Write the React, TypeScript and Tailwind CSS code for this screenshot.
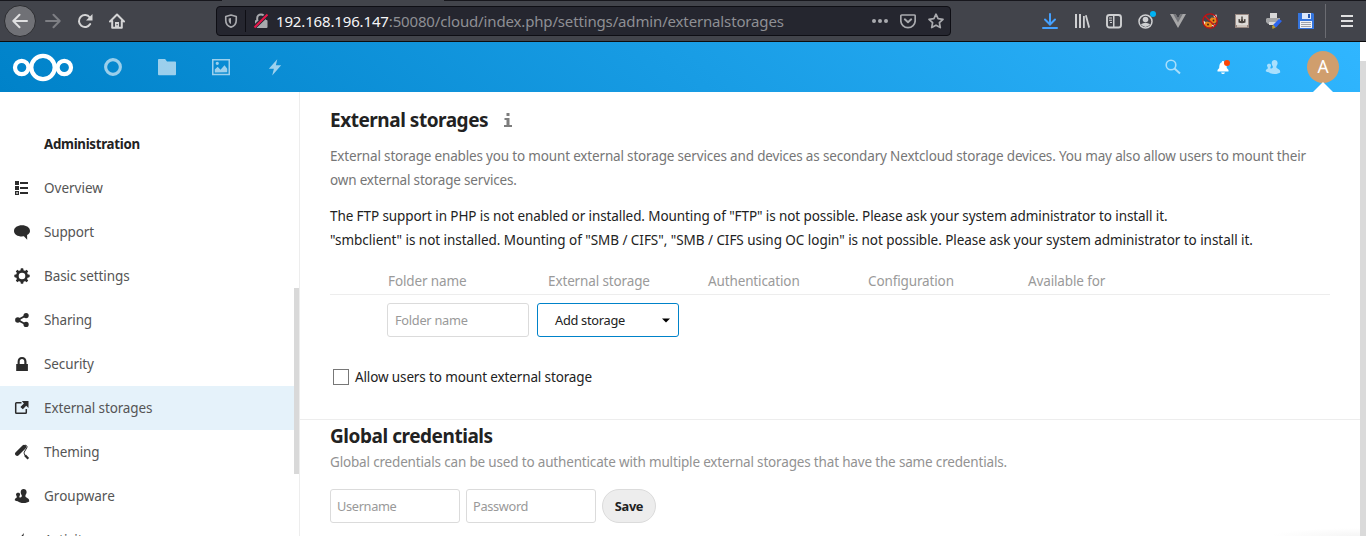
import React from "react";

type P = { children?: React.ReactNode; size?: number; className?: string; box?: string };

function Svg({ children, size = 16, className = "", box = "0 0 16 16" }: P) {
  return (
    <svg width={size} height={size} viewBox={box} className={"block shrink-0 " + className} fill="currentColor">
      {children}
    </svg>
  );
}

const Bolt = () => <path d="M10 1 2.5 9.5H7L5.5 15.5 13.5 6.5H8.8Z" />;

const Contacts = () => (
  <path d="M9.6 1C7.9 1 6.7 2.2 6.7 3.9c0 1.2.3 2.3 1 3 .2.8.1 1.500-.2 2L5.800 9.700C5.500 9.300 5.300 8.800 5.400 8.300 5.900 7.800 6.100 6.900 6.100 6.200 6.100 5.400 5.400 4.700 4.200 4.700S2 5.400 2 6.200c0 .7.200 1.600.700 2.100.1.700 0 1.300-.3 1.600L1.300 10.400C.9 10.700.8 11.200.8 12.200c.8.600 1.800.900 3 1C5 14.400 7 15 9.500 15s4.700-.6 5.700-1.500c0-1.600-.3-2.500-1.200-2.900l-2.300-1.500c-.4-.5-.4-1.400-.2-2.200.8-.8 1.100-1.900 1.100-3C12.600 2.200 11.300 1 9.600 1Z" />
);

const navItems: { label: string; icon: React.ReactNode; track: string; active?: boolean }[] = [
  {
    label: "Overview",
    track: "tracking-[0px]",
    icon: (
      <path fillRule="evenodd" d="M1 1h4v4H1ZM6 2h8v2H6ZM1 6h4v4H1ZM6 7h8v2H6ZM1 11h4v4H1ZM2.300 12.200v1.600h1.500v-1.600ZM6 12h8v2H6Z" />
    ),
  },
  {
    label: "Support",
    track: "tracking-[-0.15px]",
    icon: <path d="M8 1.300C3.500 1.300 0 3.600 0 6.900s3.500 5.500 8 5.500c.7 0 1.300 0 1.900-.1l3.300 3.400-.1-4.600c1.800-1 2.900-2.500 2.900-4.200 0-3.300-3.500-5.600-8-5.600Z" />,
  },
  {
    label: "Basic settings",
    track: "tracking-[-0.08px]",
    icon: (
      <g>
        <path fillRule="evenodd" d="M8 2a6 6 0 1 0 0 12A6 6 0 0 0 8 2Zm0 2.700a3.300 3.300 0 1 1 0 6.600 3.300 3.300 0 0 1 0-6.600Z" />
        {[0, 45, 90, 135, 180, 225, 270, 315].map((a) => (
          <rect key={a} x="6.600" y="0.300" width="2.800" height="3.200" rx=".8" transform={`rotate(${a} 8 8)`} />
        ))}
      </g>
    ),
  },
  {
    label: "Sharing",
    track: "tracking-[-0.15px]",
    icon: (
      <g>
        <path d="M12 3.500 3.800 8 12 12.500" fill="none" stroke="currentColor" strokeWidth="1.900" />
        <circle cx="12.100" cy="3.600" r="2.600" />
        <circle cx="3.800" cy="8" r="2.700" />
        <circle cx="12.100" cy="12.400" r="2.600" />
      </g>
    ),
  },
  {
    label: "Security",
    track: "tracking-[-0.1px]",
    icon: <path fillRule="evenodd" d="M8 1C5.200 1 3.600 3 3.600 5.500V8H2.200v7h11.700V8h-1.400V5.500C12.500 3 10.800 1 8 1Zm0 2c1.500 0 2.300 1 2.300 2.600V8H5.700V5.600C5.700 4 6.500 3 8 3Z" />,
  },
  {
    label: "External storages",
    track: "tracking-[-0.12px]",
    active: true,
    icon: (
      <g>
        <path d="M7.500 2.700H2.500Q1.700 2.700 1.700 3.500V12.500Q1.700 13.300 2.500 13.300H11.500Q12.300 13.300 12.300 12.500V9" fill="none" stroke="currentColor" strokeWidth="1.500" />
        <path d="M7.800 1H14.500V8L12.200 5.800 8.800 9.200 6.400 7 9.900 3.500Z" />
      </g>
    ),
  },
  {
    label: "Theming",
    track: "tracking-[-0.1px]",
    icon: (
      <g>
        <path d="M10 3 3.200 9.800" fill="none" stroke="currentColor" strokeWidth="4.300" strokeLinecap="round" />
        <path d="M11 1.200C13 1.200 13.500 2.500 12.700 4L10.200 8.200Q9.700 9.800 11.300 11.800" fill="none" stroke="currentColor" strokeWidth="1" />
        <path d="m11 11.200 3.300 3.600" fill="none" stroke="currentColor" strokeWidth="2.300" />
      </g>
    ),
  },
  { label: "Groupware", track: "tracking-[0px]", icon: <Contacts /> },
  { label: "Activity", track: "tracking-[0px]", icon: <Bolt /> },
];

function BrowserBar() {
  return (
    <div className="relative flex h-[42px] items-center border-t border-b border-t-[#17171d] border-b-[#0c0c0d] bg-[#42444b] text-[#cfd0d2]">
      <div className="absolute -top-px left-[222px] h-px w-[222px] bg-[#42444b]" />
      <div className="ml-1 flex h-8 w-8 shrink-0 items-center justify-center rounded-full border border-[#2c2d31] bg-[#707176] text-[#e0e0e1]">
        <Svg><path d="M15 8H1.500M7.500 1.800 1.300 8l6.200 6.200" fill="none" stroke="currentColor" strokeWidth="2" strokeLinecap="round" strokeLinejoin="round" /></Svg>
      </div>
      <Svg className="ml-[9px] text-[#7e7f84]"><path d="M1 8h13.500M8.500 1.800 14.700 8l-6.200 6.200" fill="none" stroke="currentColor" strokeWidth="2" strokeLinecap="round" strokeLinejoin="round" /></Svg>
      <Svg className="ml-4 text-[#d4d4d5]">
        <path d="M13.200 11A6 6 0 1 1 12.800 4.500" fill="none" stroke="currentColor" strokeWidth="2" strokeLinecap="round" />
        <path d="M15.500 1v6.500H9Z" />
      </Svg>
      <Svg className="ml-4 text-[#d4d4d5]">
        <path d="M1 8.500 8 1.500l7 7M3.200 8v6.800h9.600V8" fill="none" stroke="currentColor" strokeWidth="2" strokeLinecap="round" strokeLinejoin="round" />
        <path d="M6 9h4v6H6Z" /><path d="M7.500 11h1.200v1.300H7.500Z" fill="#42444b" />
      </Svg>
      <div className="ml-[91px] flex h-[30px] w-[735px] shrink-0 items-center rounded-[4px] border border-[#0e0e14] bg-[#25262f] text-[#a9aaae]">
        <Svg size={14} className="ml-[7px]">
          <path d="M8 1.200 14 2.800V7c0 4-2.300 6.800-6 8C4.300 13.800 2 11 2 7V2.800Z" fill="none" stroke="currentColor" strokeWidth="1.900" strokeLinejoin="round" />
          <path d="M8 4.500v7C6.200 10.500 5.300 9 5.300 7V5Z" />
        </Svg>
        <div className="ml-[7px] h-[22px] w-px bg-[#0e0e14]" />
        <Svg className="ml-[7px]">
          <path d="M4.200 7.500V5.200a3.800 3.800 0 0 1 7.600 0v2.300" fill="none" stroke="currentColor" strokeWidth="2" />
          <rect x="2" y="7" width="12.500" height="8" rx="1" />
          <path d="M1 14.500 14.500 1.500" stroke="#25262f" strokeWidth="4" />
          <path d="M1.500 14.500 14.500 1.500" stroke="#e8174a" strokeWidth="2" />
        </Svg>
        <div className="ml-[7px] w-[590px] whitespace-nowrap font-['Noto_Sans'] text-[15px] leading-[22px] tracking-[-0.15px] text-[#8e8f94]">
          <span className="text-[#f5f5f7]">192.168.196.147</span>:50080/cloud/index.php/settings/admin/externalstorages
        </div>
        <Svg className="ml-[6px]"><circle cx="2" cy="8" r="2" /><circle cx="8" cy="8" r="2" /><circle cx="14" cy="8" r="2" /></Svg>
        <Svg className="ml-3">
          <path d="M2 2h12.200a1 1 0 0 1 1 1v4.500a7.200 7.200 0 0 1-14.400 0V3a1 1 0 0 1 1-1Z" fill="none" stroke="currentColor" strokeWidth="1.700" />
          <path d="m4.800 6.300 3.200 3 3.200-3" fill="none" stroke="currentColor" strokeWidth="1.900" strokeLinecap="round" strokeLinejoin="round" />
        </Svg>
        <Svg className="ml-3"><path d="m8 1.200 2.100 4.500 4.900.6-3.600 3.400.9 4.900L8 12.200l-4.300 2.400.9-4.900L1 6.300l4.900-.6Z" fill="none" stroke="currentColor" strokeWidth="1.700" strokeLinejoin="round" /></Svg>
      </div>
      <Svg className="ml-[91px] text-[#45a1ff]"><path d="M8 1v10M3 6.500 8 11.500l5-5M1 15h14" fill="none" stroke="currentColor" strokeWidth="2" strokeLinecap="round" /></Svg>
      <Svg className="ml-4"><path d="M1 1h2v14H1ZM5 1h2v14H5ZM9 3h1.800v12H9ZM11 2.500l1.700-.6L16 14.300l-1.700.7Z" /></Svg>
      <Svg className="ml-4">
        <rect x="1" y="2" width="14" height="12.500" rx="2.500" fill="none" stroke="currentColor" strokeWidth="1.900" />
        <path d="M7 2h1.500v12H7ZM3 4.500h3v1H3ZM3 6.700h3v1H3ZM4 9h2v1H4Z" />
      </Svg>
      <div className="relative ml-4">
        <Svg><circle cx="7.500" cy="8.500" r="6.500" fill="none" stroke="currentColor" strokeWidth="1.500" /><circle cx="7.500" cy="6.500" r="2.800" /><path d="M2.800 11.300Q7.500 8.300 12.200 11.300 9.800 14 7.500 14t-4.700-2.700Z" /></Svg>
        <div className="absolute -top-[2px] left-[12px] h-[6px] w-[6px] rounded-full bg-[#00b3f4]" />
      </div>
      <Svg className="ml-4"><path d="M0 1h5.500L8 5.500 10.500 1H16L8 15Z" fill="#a7a7a8" /><path d="M3.200 1h2.500L8 5.200 10.300 1h2.500L8 9.500Z" fill="#747579" /></Svg>
      <Svg className="ml-4">
        <path d="M7.500 6.500 9.500 4.500 14.500 5 15 8.500 12.500 10.500 8.500 9.500ZM2.500 9.500 5 8.500 8.500 9.500 11 12 9 14.500H4.500L2 12Z" fill="#e8871a" />
        <path d="M11 2.500 14.500 1.500 15 5.500 12.500 4.500ZM1.200 7.500 3.500 9 2 12ZM9.500 12.500 13.500 11 12 14Z" fill="#f5ead8" />
        <circle cx="6" cy="11.500" r="1" fill="#482713" /><circle cx="11.500" cy="7.500" r=".9" fill="#482713" />
        <circle cx="8" cy="8" r="7.200" fill="none" stroke="#c50f12" strokeWidth="1.300" /><path d="m3 3 10 10" stroke="#d01613" strokeWidth="1.200" />
      </Svg>
      <Svg className="ml-4">
        <rect x="1" y="1" width="14" height="14" fill="#978882" /><rect x="2" y="2" width="12" height="10" fill="#dedbd8" />
        <path d="M7.300 3.500h1.400v3L11.500 6v3.500Q8 11 4.500 9.500V6L7.300 6.500Z" fill="#48433f" /><path d="M6 6h1v2H6ZM9 6h1v2H9ZM3 12h10v2H3Z" fill="#cfc6be" />
      </Svg>
      <Svg className="ml-4">
        <path d="M4 0h7v5H4Z" fill="#d8d8d8" /><path d="M1 5h13v4l-2 2H2L0 9V6Z" fill="#a4a5a7" /><path d="M3 9h7v3H3Z" fill="#dadada" />
        <path d="m7 12 6-6 3 2-5.500 6-2.500 1Z" fill="#2b65ee" /><path d="m6 13 1.500-1 2 2.500-3 1.500Z" fill="#b59b32" />
      </Svg>
      <Svg className="ml-4">
        <path d="M0 0h15l1 1v15H0Z" fill="#3575dd" /><path d="M4 0h9v6H4Z" fill="#dce8fb" /><path d="M10 1h2v4h-2Z" fill="#2558af" /><path d="M2 8h12v7H2Z" fill="#f2f3f5" /><path d="M3 9h10v1H3ZM3 11h10v1H3ZM3 13h10v1H3Z" fill="#a1a3a9" />
      </Svg>
      <div className="ml-[11px] h-[34px] w-px bg-[#6b6c72]" />
      <Svg className="ml-[13px] text-[#e0e0e1]"><path d="M2 2h12v2H2ZM2 7h12v2H2ZM2 12h12v2H2Z" /></Svg>
    </div>
  );
}

function Header() {
  return (
    <header className="flex h-[50px] items-center bg-[linear-gradient(40deg,#0082c9_0%,#30b6ff_100%)] text-white">
      <svg width="62" height="30" viewBox="0 0 62 30" className="ml-3 block shrink-0" fill="none" stroke="white" strokeWidth="4.200">
        <circle cx="9.700" cy="15.500" r="6.700" /><circle cx="31" cy="15.500" r="11.700" /><circle cx="52.300" cy="15.500" r="6.700" />
      </svg>
      <Svg size={20} className="ml-[29px] opacity-60"><circle cx="8" cy="8" r="5.900" fill="none" stroke="currentColor" strokeWidth="2.500" /></Svg>
      <Svg size={20} className="ml-[34px] opacity-60"><path d="M1.500 1.500h5l1.500 2h6.500q.7 0 .7.700v9.600q0 .7-.7.700H1.500q-.7 0-.7-.7V2.200q0-.7.7-.7Z" /></Svg>
      <Svg size={20} className="ml-[34px] opacity-60">
        <path fillRule="evenodd" d="M.8 1.500h14.400v13H.800ZM2 2.700v10.600h12V2.700ZM3 12.300V10l2.300-2.300 2.300 2.500 3.200-3.700L13 9.400v2.900ZM5 3.800a1.300 1.300 0 1 1 0 2.600 1.300 1.300 0 0 1 0-2.600Z" />
      </Svg>
      <Svg size={18} className="ml-[35px] opacity-60"><Bolt /></Svg>
      <Svg className="ml-[881px] opacity-60"><circle cx="6" cy="6" r="4.800" fill="none" stroke="currentColor" strokeWidth="1.600" /><path d="m9.500 9.500 5.500 5" stroke="currentColor" strokeWidth="2" /></Svg>
      <div className="relative ml-[34px]">
        <Svg><path d="M8 2c-.8 0-1.200.5-1.200 1.300C4.700 4 4.300 6 4.200 9L2.500 11v1.500h11V11L11.800 9c-.1-3-.5-5-2.600-5.700C9.200 2.500 8.800 2 8 2ZM6 13.500h4q-.5 1.600-2 1.600t-2-1.600Z" /></Svg>
        <div className="absolute top-[1px] left-[9px] h-[6px] w-[6px] rounded-full bg-[#ff4402]" />
      </div>
      <Svg className="ml-[34px] opacity-60"><Contacts /></Svg>
      <div className="relative ml-[26px] flex h-[50px] w-8 shrink-0 items-center">
        <div className="flex h-8 w-8 items-center justify-center rounded-full bg-[#d09e6d] pb-px font-['Noto_Sans'] text-[17.5px]">A</div>
        <div className="absolute bottom-0 left-[6px] h-0 w-0 border-r-[10px] border-b-[10px] border-l-[10px] border-r-transparent border-b-white border-l-transparent" />
      </div>
    </header>
  );
}

export default function App() {
  return (
    <div className="h-[536px] w-[1366px] overflow-hidden bg-white font-['Noto_Sans',sans-serif] text-[13.5px] text-[#222]">
      <BrowserBar />
      <div className="flex h-[494px]">
        <div className="relative w-[1360px]">
          <Header />
          <div className="flex h-[444px] overflow-hidden">
            <aside className="flex w-[300px] shrink-0 border-r border-[#ededed]">
              <nav className="w-[294px] pt-[30px]">
                <h2 className="flex h-11 items-center pt-[2px] pl-11 text-[13.3px] font-bold tracking-[-0.3px]">Administration</h2>
                {navItems.map((item) => (
                  <a key={item.label} className={"flex h-11 items-center pl-[14px] text-[#555] " + (item.active ? "bg-[#e5f2fa]" : "")}>
                    <Svg className="text-[#2b2b2b]">{item.icon}</Svg>
                    <span className={"ml-[14px] " + item.track}>{item.label}</span>
                  </a>
                ))}
              </nav>
              <div className="mt-[196px] h-[186px] w-[5px] bg-[#d9d9d9]" />
            </aside>
            <main className="flex-1 whitespace-nowrap">
              <section className="h-[328px] border-b border-[#ededed] pl-[30px]">
                <h2 className="flex h-[52px] items-center pt-[4px] text-[19px] font-bold tracking-[-0.47px]">
                  <span>External storages</span>
                  <svg width="10" height="14" viewBox="0 0 10 14" className="ml-[15px]" fill="#7d7d7d"><path d="M3.500 0h3v3h-3ZM1.500 5h5v7H9v2H1v-2h2.500V7h-2Z" /></svg>
                </h2>
                <p className="leading-6 tracking-[-0.17px] text-[#767676]">External storage enables you to mount external storage services and devices as secondary Nextcloud storage devices. You may also allow users to mount their<br />own external storage services.</p>
                <p className="mt-3 leading-6"><span className="tracking-[-0.09px]">The FTP support in PHP is not enabled or installed. Mounting of "FTP" is not possible. Please ask your system administrator to install it.</span><br /><span className="tracking-[-0.045px]">"smbclient" is not installed. Mounting of "SMB / CIFS", "SMB / CIFS using OC login" is not possible. Please ask your system administrator to install it.</span></p>
                <div className="mt-[17px] grid h-[26px] w-[1000px] grid-cols-[160px_160px_160px_160px_1fr] border-b border-[#ededed] pl-[58px] leading-6 tracking-[-0.13px] text-[#9a9a9a]">
                  <span>Folder name</span><span>External storage</span><span>Authentication</span><span>Configuration</span><span>Available for</span>
                </div>
                <div className="mt-2 ml-[57px] flex gap-2 text-[12.8px] tracking-[-0.28px]">
                  <div className="flex h-[34px] w-[142px] items-center rounded-[3px] border border-[#dbdbdb] pt-px pl-[7px] text-[#999]">Folder name</div>
                  <div className="flex h-[34px] w-[142px] items-center justify-between rounded-[3px] border border-[#0082c9] pt-px pr-2 pl-[17px]">
                    <span>Add storage</span>
                    <svg width="8" height="5" viewBox="0 0 8 5"><path d="M0 .5h8L4 4.500Z" /></svg>
                  </div>
                </div>
                <div className="mt-7 ml-[3px] flex h-6 items-center gap-[6px] tracking-[-0.13px]">
                  <div className="h-4 w-4 border border-[#777]" />
                  <span>Allow users to mount external storage</span>
                </div>
              </section>
              <section className="pl-[30px]">
                <h2 className="h-[30px] text-[19px] leading-[32px] font-bold tracking-[-0.45px]">Global credentials</h2>
                <p className="leading-6 tracking-[-0.17px] text-[#929292]">Global credentials can be used to authenticate with multiple external storages that have the same credentials.</p>
                <div className="mt-[15px] flex gap-[6px] text-[12.8px] tracking-[-0.35px]">
                  <div className="flex h-[34px] w-[130px] items-center rounded-[3px] border border-[#dbdbdb] pt-px pl-[6px] text-[#999]">Username</div>
                  <div className="flex h-[34px] w-[130px] items-center rounded-[3px] border border-[#dbdbdb] pt-px pl-[6px] text-[#999]">Password</div>
                  <button className="flex h-[34px] w-[54px] items-center justify-center rounded-full border border-[#dbdbdb] bg-[#ededed] pt-px font-bold">Save</button>
                </div>
              </section>
            </main>
          </div>
          <div className="absolute right-0 bottom-0 h-[8px] w-[90px] bg-[radial-gradient(ellipse_at_bottom_right,#f5f5f5_0%,#ffffff_70%)]" />
        </div>
        <div className="w-[6px] pt-[19px]"><div className="h-[475px] bg-[#dadada]" /></div>
      </div>
    </div>
  );
}
